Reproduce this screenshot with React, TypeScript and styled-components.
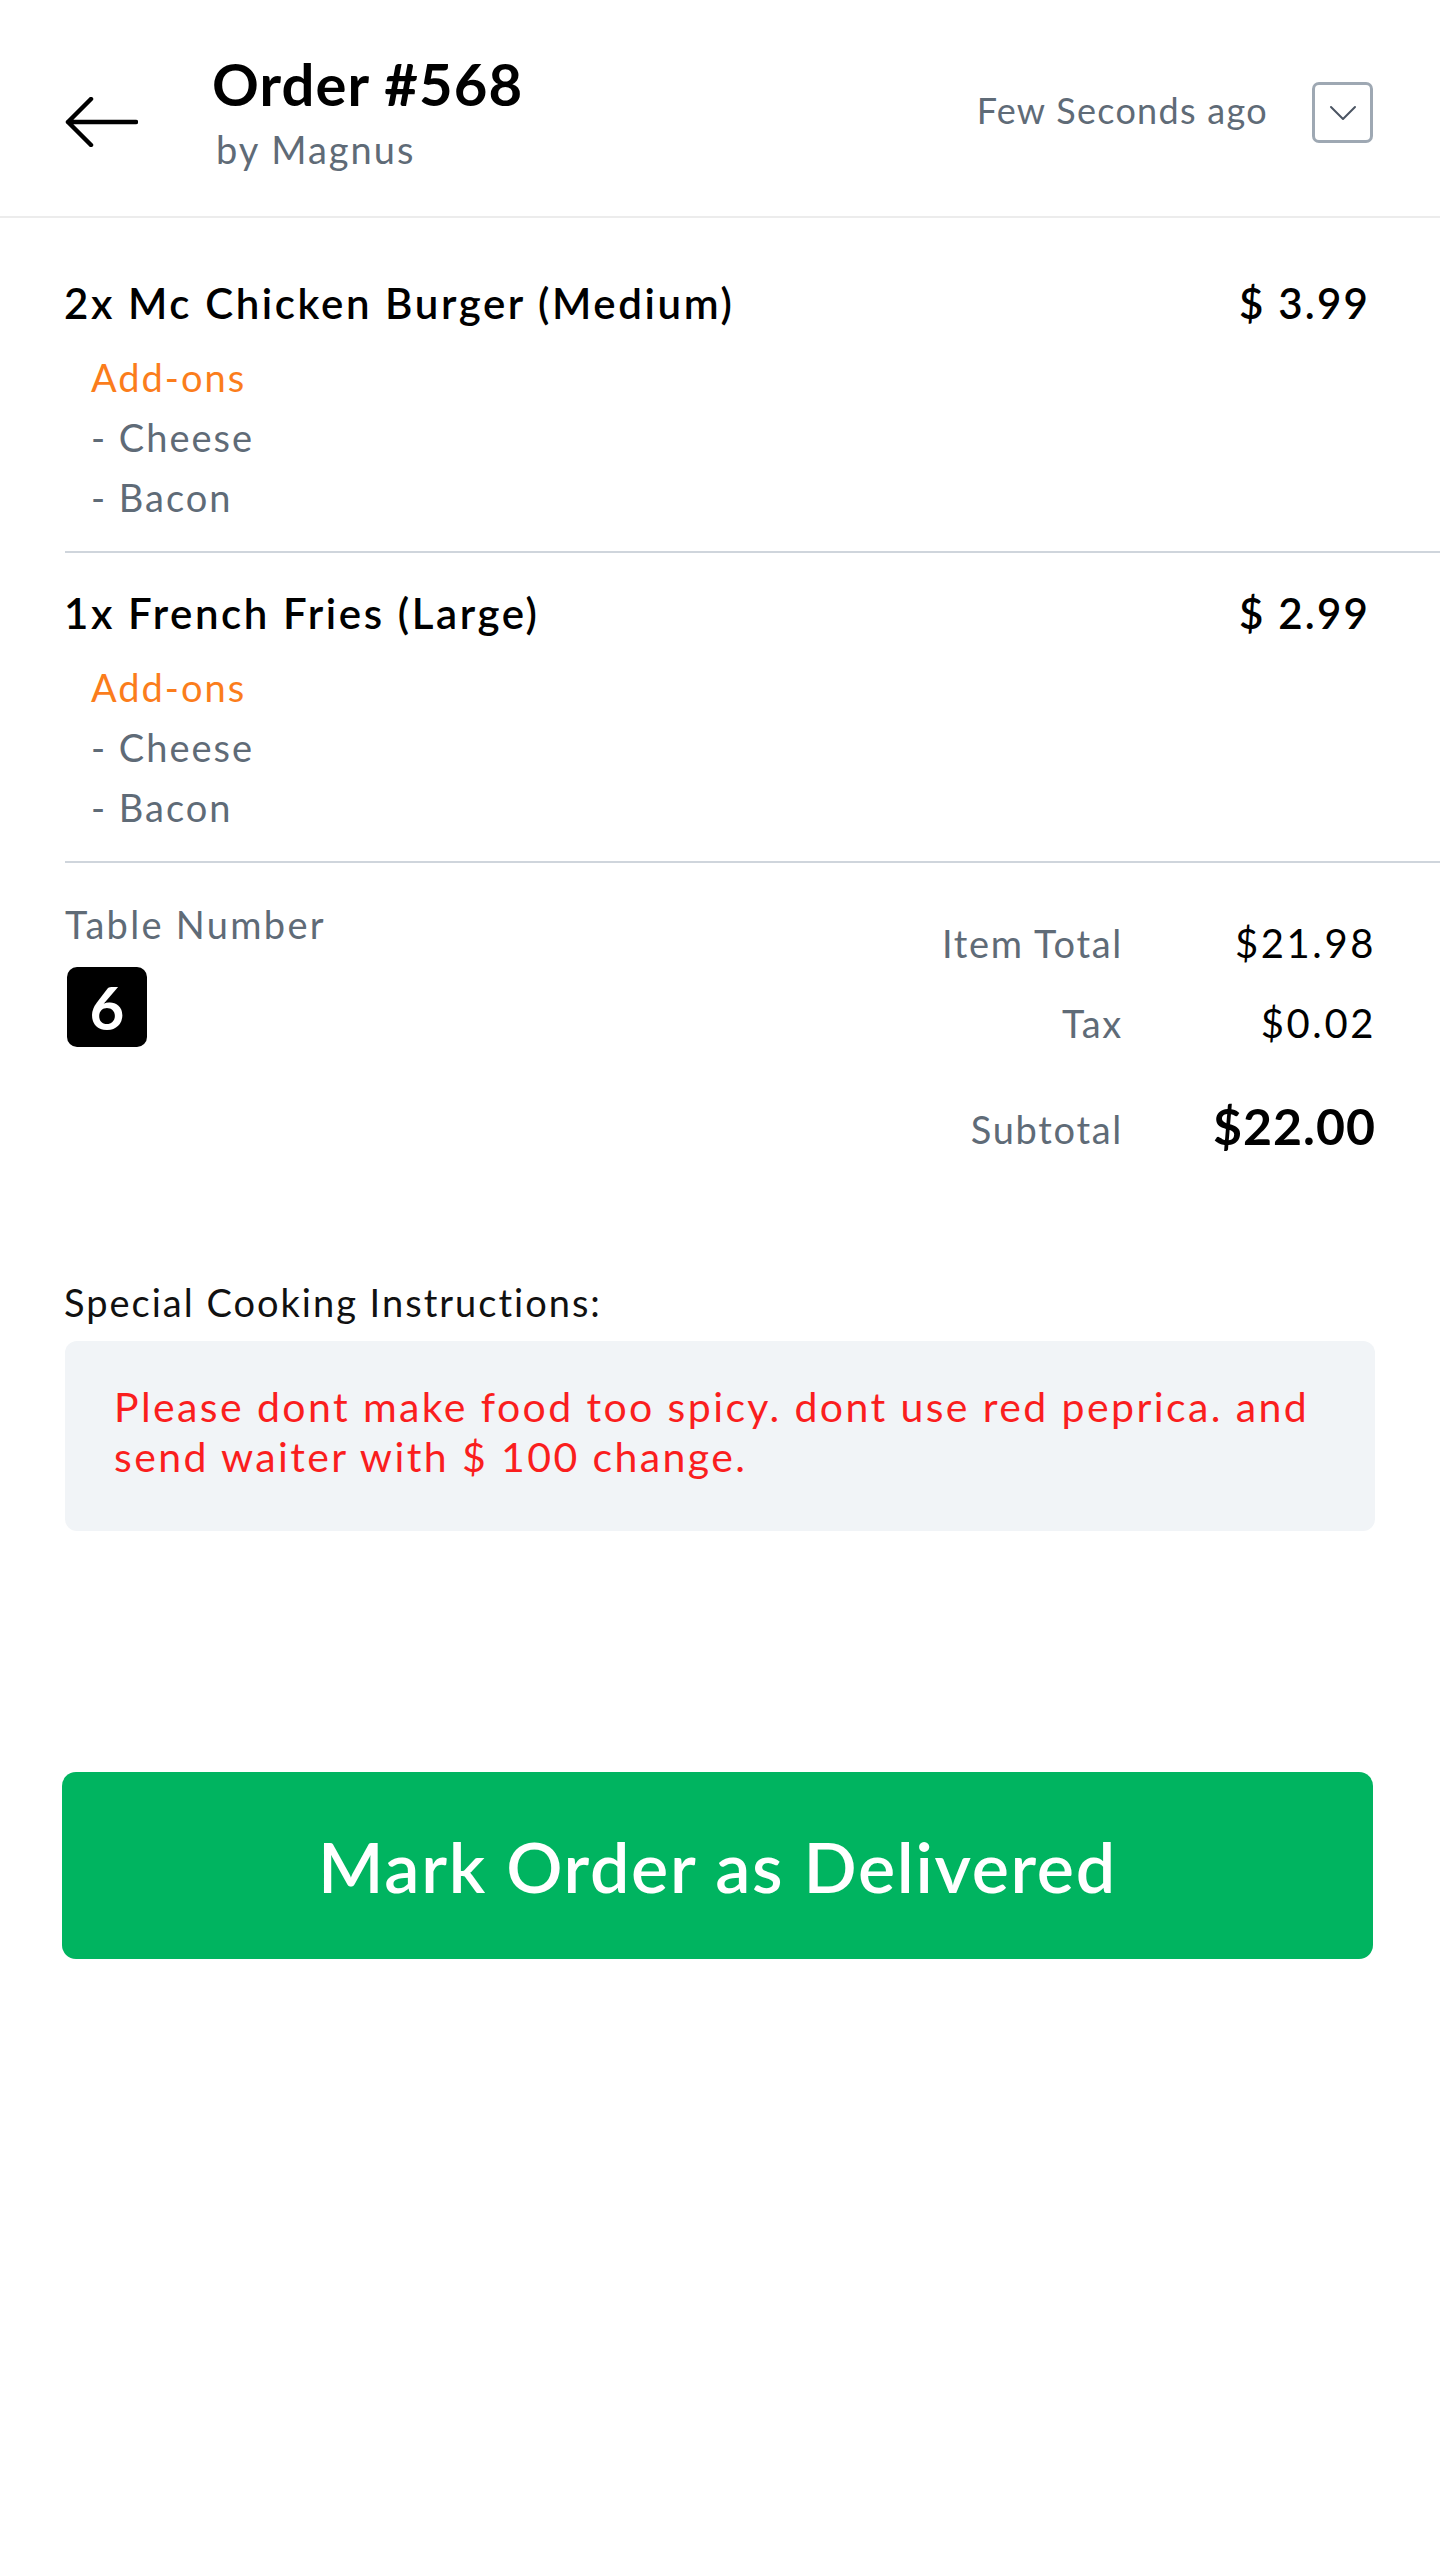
import React from "react";
import styled, { createGlobalStyle } from "styled-components";

const GlobalStyle = createGlobalStyle`
  html, body {
    margin: 0;
    padding: 0;
    background: #ffffff;
  }
  body {
    font-family: Lato, "Noto Sans", "Liberation Sans", sans-serif;
    color: #000;
  }
  * { box-sizing: border-box; }
`;

const Page = styled.div`
  width: 1440px;
  min-height: 2560px;
  background: #fff;
  display: flex;
  flex-direction: column;
`;

const Header = styled.header`
  height: 218px;
  border-bottom: 2px solid #ececec;
  display: flex;
  align-items: flex-start;
  padding: 52px 67px 0 64px;
`;

const BackButton = styled.button`
  width: 74px;
  height: 50px;
  margin-top: 45px;
  padding: 0;
  border: none;
  background: transparent;
  display: flex;
  align-items: center;
  cursor: pointer;
`;

const TitleBlock = styled.div`
  display: flex;
  flex-direction: column;
  margin-left: 74px;
  flex: 1;
`;

const Title = styled.h1`
  margin: 0;
  font-size: 58px;
  line-height: 64px;
  font-weight: 700;
  letter-spacing: 1.1px;
  color: #000;
`;

const Subtitle = styled.div`
  margin-top: 10px;
  margin-left: 4px;
  font-size: 38px;
  line-height: 46px;
  letter-spacing: 2px;
  color: #5f6b77;
`;

const HeaderRight = styled.div`
  display: flex;
  align-items: center;
  gap: 44px;
  margin-top: 30px;
`;

const TimeAgo = styled.span`
  font-size: 36px;
  line-height: 44px;
  letter-spacing: 1.3px;
  color: #5f6b77;
  margin-top: -5px;
`;

const DropBox = styled.button`
  width: 61px;
  height: 61px;
  border: 3px solid #9ea8b3;
  border-radius: 7px;
  background: #fff;
  display: flex;
  align-items: center;
  justify-content: center;
  padding: 0;
`;

const ItemList = styled.section`
  margin-left: 65px;
  padding-top: 25px;
`;

const ItemRow = styled.div`
  padding: 32px 70px 24px 0;
  border-bottom: 2px solid #cfd5dc;
`;

const ItemHead = styled.div`
  display: flex;
  justify-content: space-between;
  align-items: center;
`;

const ItemName = styled.div`
  font-size: 42px;
  line-height: 56px;
  font-weight: 600;
  letter-spacing: 2.6px;
  color: #000;
  margin-left: -1px;
`;

const Price = styled.div`
  font-size: 42px;
  line-height: 56px;
  font-weight: 600;
  letter-spacing: 2.2px;
  color: #000;
`;

const AddOns = styled.div`
  margin-top: 16px;
  padding-left: 26px;
  display: flex;
  flex-direction: column;
`;

const AddOnTitle = styled.div`
  font-size: 38px;
  line-height: 60px;
  letter-spacing: 2px;
  color: #fb7d1c;
`;

const AddOnItem = styled.div`
  font-size: 38px;
  line-height: 60px;
  letter-spacing: 2px;
  color: #5f6b77;
`;

const Summary = styled.section`
  display: flex;
  justify-content: space-between;
  align-items: flex-start;
  padding: 38px 64px 0 65px;
`;

const TableCol = styled.div`
  display: flex;
  flex-direction: column;
  gap: 20px;
`;

const TableLabel = styled.div`
  font-size: 38px;
  line-height: 46px;
  letter-spacing: 2.3px;
  color: #5f6b77;
`;

const TableBadge = styled.div`
  width: 80px;
  height: 80px;
  margin-left: 2px;
  border-radius: 10px;
  background: #000;
  color: #fff;
  font-size: 60px;
  font-weight: 700;
  display: flex;
  align-items: center;
  justify-content: center;
`;

const Totals = styled.div`
  margin-top: 17px;
  display: grid;
  grid-template-columns: auto 190px;
  column-gap: 63px;
  row-gap: 30px;
  align-items: center;
`;

const TotalLabel = styled.div<{ $big?: boolean }>`
  font-size: 38px;
  line-height: 50px;
  letter-spacing: 1.7px;
  color: #5f6b77;
  text-align: right;
  margin-top: ${(p) => (p.$big ? "26px" : "0")};
`;

const TotalValue = styled.div<{ $big?: boolean }>`
  font-size: ${(p) => (p.$big ? "50px" : "40px")};
  font-weight: ${(p) => (p.$big ? 700 : 400)};
  letter-spacing: ${(p) => (p.$big ? "1px" : "2.6px")};
  line-height: 50px;
  color: #000;
  text-align: right;
  margin-top: ${(p) => (p.$big ? "20px" : "0")};
`;

const Instructions = styled.section`
  padding: 125px 65px 0 64px;
  display: flex;
  flex-direction: column;
  gap: 16px;
`;

const InstructionsLabel = styled.div`
  font-size: 38px;
  line-height: 46px;
  letter-spacing: 2px;
  color: #111;
`;

const NoteBox = styled.div`
  margin-left: 1px;
  background: #f1f4f7;
  border-radius: 12px;
  padding: 41px 40px 49px 49px;
  font-size: 41px;
  line-height: 50px;
  letter-spacing: 2.4px;
  color: #fa1e1e;
`;

const ActionWrap = styled.div`
  padding: 241px 67px 0 62px;
`;

const DeliverButton = styled.button`
  width: 100%;
  height: 187px;
  border: none;
  border-radius: 14px;
  background: #00b460;
  color: #fff;
  font-family: Lato, "Noto Sans", "Liberation Sans", sans-serif;
  font-size: 70px;
  font-weight: 600;
  letter-spacing: 1.7px;
  cursor: pointer;
`;

type Item = { name: string; price: string; addons: string[] };

const items: Item[] = [
  { name: "2x Mc Chicken Burger (Medium)", price: "$ 3.99", addons: ["Cheese", "Bacon"] },
  { name: "1x French Fries (Large)", price: "$ 2.99", addons: ["Cheese", "Bacon"] },
];

export default function App() {
  return (
    <>
      <GlobalStyle />
      <Page>
        <Header>
          <BackButton aria-label="Back">
            <svg width="74" height="50" viewBox="0 0 74 50" fill="none">
              <path
                d="M72 25H4M27 2L4 25l23 23"
                stroke="#000"
                strokeWidth="4.5"
                strokeLinecap="round"
                strokeLinejoin="round"
              />
            </svg>
          </BackButton>
          <TitleBlock>
            <Title>Order #568</Title>
            <Subtitle>by Magnus</Subtitle>
          </TitleBlock>
          <HeaderRight>
            <TimeAgo>Few Seconds ago</TimeAgo>
            <DropBox aria-label="Expand">
              <svg width="28" height="16" viewBox="0 0 28 16" fill="none">
                <path d="M2 2l12 12L26 2" stroke="#4b5563" strokeWidth="2" strokeLinecap="round" strokeLinejoin="round" />
              </svg>
            </DropBox>
          </HeaderRight>
        </Header>

        <ItemList>
          {items.map((it) => (
            <ItemRow key={it.name}>
              <ItemHead>
                <ItemName>{it.name}</ItemName>
                <Price>{it.price}</Price>
              </ItemHead>
              <AddOns>
                <AddOnTitle>Add-ons</AddOnTitle>
                {it.addons.map((a) => (
                  <AddOnItem key={a}>- {a}</AddOnItem>
                ))}
              </AddOns>
            </ItemRow>
          ))}
        </ItemList>

        <Summary>
          <TableCol>
            <TableLabel>Table Number</TableLabel>
            <TableBadge>6</TableBadge>
          </TableCol>
          <Totals>
            <TotalLabel>Item Total</TotalLabel>
            <TotalValue>$21.98</TotalValue>
            <TotalLabel>Tax</TotalLabel>
            <TotalValue>$0.02</TotalValue>
            <TotalLabel $big>Subtotal</TotalLabel>
            <TotalValue $big>$22.00</TotalValue>
          </Totals>
        </Summary>

        <Instructions>
          <InstructionsLabel>Special Cooking Instructions:</InstructionsLabel>
          <NoteBox>
            Please dont make food too spicy. dont use red peprica. and send waiter with $ 100 change.
          </NoteBox>
        </Instructions>

        <ActionWrap>
          <DeliverButton>Mark Order as Delivered</DeliverButton>
        </ActionWrap>
      </Page>
    </>
  );
}
